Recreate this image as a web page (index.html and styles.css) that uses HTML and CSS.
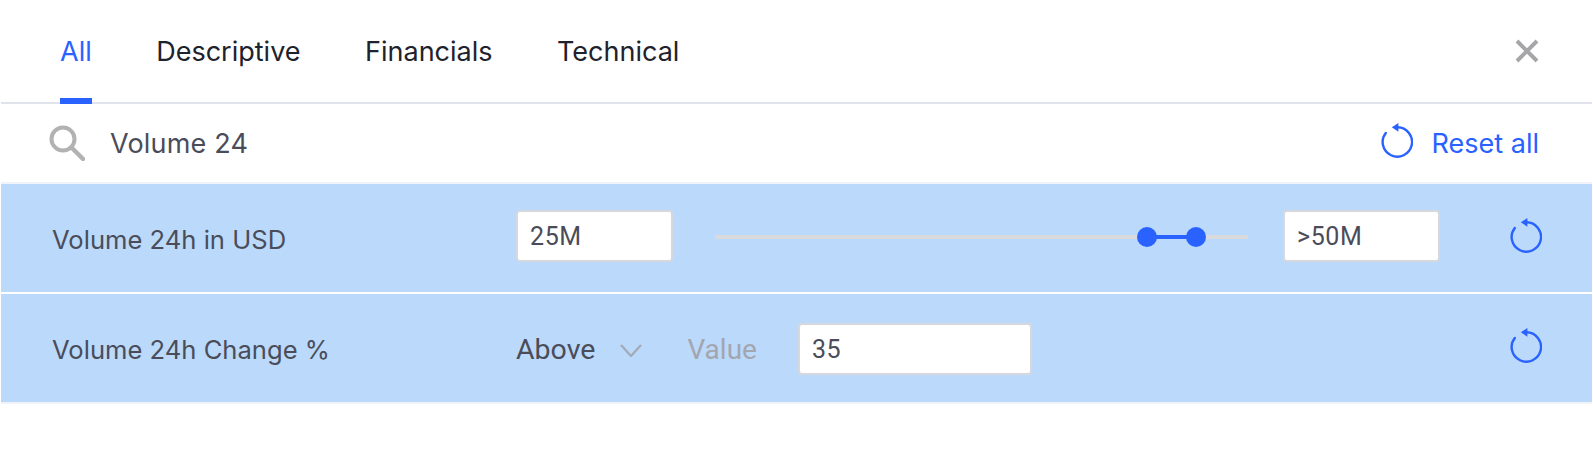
FILE: index.html
```html
<!DOCTYPE html>
<html lang="en">
<head>
<meta charset="utf-8">
<title>Filters</title>
<link rel="stylesheet" href="styles.css">
</head>
<body>
<svg class="defs" width="0" height="0" aria-hidden="true">
  <symbol id="reset" viewBox="0 0 32 35">
    <path d="M16.5 4.3A14.7 14.7 0 1 1 4.8 9.9" fill="none" stroke="currentColor" stroke-width="2.4" stroke-linecap="round"/>
    <path d="M10.8 4.3L17.4 0V8.8Z" fill="currentColor"/>
  </symbol>
</svg>
<div class="panel">
  <header class="tabs">
    <nav class="tab-list">
      <a class="tab tab-active">All</a>
      <a class="tab">Descriptive</a>
      <a class="tab">Financials</a>
      <a class="tab">Technical</a>
    </nav>
    <svg class="close" viewBox="0 0 24 24" aria-label="Close"><path d="M2 2L22 22M22 2L2 22" fill="none" stroke="#a6a6a8" stroke-width="4"/></svg>
  </header>
  <div class="search">
    <svg class="search-icon" viewBox="0 0 36 36"><circle cx="14" cy="14" r="11.5" fill="none" stroke="#b2b2b2" stroke-width="4"/><path d="M22.5 22.5L34 34" fill="none" stroke="#b2b2b2" stroke-width="4.4" stroke-linecap="round"/></svg>
    <span class="search-text">Volume 24</span>
    <button class="reset-all"><svg class="reset-icon reset-all-icon"><use href="#reset"/></svg><span>Reset all</span></button>
  </div>
  <div class="row">
    <span class="label">Volume 24h in USD</span>
    <div class="control control-range">
      <div class="input input-short">25M</div>
      <div class="slider">
        <div class="track"></div>
        <div class="range"></div>
        <div class="knob knob-a"></div>
        <div class="knob knob-b"></div>
      </div>
      <div class="input input-short">&gt;50M</div>
    </div>
    <svg class="reset-icon row-reset"><use href="#reset"/></svg>
  </div>
  <div class="row row-last">
    <span class="label">Volume 24h Change %</span>
    <div class="control control-cond">
      <span class="select">Above</span>
      <svg class="chevron" viewBox="0 0 22 13"><path d="M1 1L11 12L21 1" fill="none" stroke="#a3aab5" stroke-width="2.2"/></svg>
      <span class="value-label">Value</span>
      <div class="input input-long">35</div>
    </div>
    <svg class="reset-icon row-reset"><use href="#reset"/></svg>
  </div>
</div>
</body>
</html>
```
FILE: styles.css
```css
* { box-sizing: border-box; }
html, body { margin: 0; background: #fff; }
body { font-family: Inter, "Liberation Sans", sans-serif; height: 471px; overflow: hidden; }
.defs { position: absolute; }
.panel { margin: 0 1px; }
.tabs {
  height: 104px;
  border-bottom: 2px solid #e0e3eb;
  display: flex;
  justify-content: space-between;
  padding: 0 53px 0 59px;
}
.tab-list { display: flex; gap: 64.5px; }
.tab {
  height: 104px;
  padding-top: 36px;
  font-size: 27px;
  line-height: 32px;
  color: #1e222d;
}
.tab-active { color: #2962ff; border-bottom: 6px solid #2962ff; }
.close { width: 24px; height: 24px; margin-top: 39px; }
.search {
  height: 80px;
  border-bottom: 2px solid #f0f3fa;
  display: flex;
  align-items: center;
  padding: 0 53px 0 48px;
}
.search-icon { width: 36px; height: 36px; margin-right: 25px; }
.search-text { font-size: 27px; letter-spacing: 0.2px; color: #4a4d59; flex: 1; }
.reset-all {
  display: flex;
  align-items: center;
  gap: 19px;
  padding: 0;
  border: 0;
  background: none;
  font: inherit;
  font-size: 27px;
  color: #2962ff;
}
.reset-icon { width: 32px; height: 35px; color: #2962ff; flex: none; }
.reset-all-icon { margin-bottom: 5px; }
.row-reset { margin-bottom: 6px; }
.row {
  height: 110px;
  background: #bbd9fb;
  border-bottom: 2px solid #fff;
  display: flex;
  align-items: center;
  padding: 0 50px 0 51px;
}
.row-last { border-bottom-color: #f0f3fa; }
.label { width: 464px; padding-top: 2px; font-size: 25.6px; color: #4a4d59; }
.control { flex: 1; display: flex; align-items: center; }
.control-range { margin-bottom: 4px; }
.control-cond { margin-top: 2px; }
.input {
  height: 52px;
  background: #fff;
  border: 2px solid #d6d8de;
  border-radius: 4px;
  padding: 0 12px;
  display: flex;
  align-items: center;
  font-family: Roboto, "Liberation Sans", sans-serif;
  font-size: 25px;
  letter-spacing: 0.6px;
  color: #4a4d59;
}
.input-short { width: 157px; }
.input-long { width: 234px; margin-left: 41px; }
.slider { position: relative; width: 532px; height: 20px; margin: 2px 35px 0 43px; }
.track { position: absolute; left: -1px; right: 0; top: 8px; height: 4px; background: #d9dade; }
.range { position: absolute; left: 431px; width: 49px; top: 8px; height: 4px; background: #2962ff; }
.knob { position: absolute; top: 0; width: 20px; height: 20px; border-radius: 50%; background: #2962ff; }
.knob-a { left: 421px; }
.knob-b { left: 470px; }
.select { font-family: Roboto, "Liberation Sans", sans-serif; font-size: 28.5px; color: #4a4d59; }
.chevron { width: 22px; height: 13px; margin: 2px 0 0 25px; }
.value-label { font-family: Roboto, "Liberation Sans", sans-serif; font-size: 28px; color: #a3a6af; margin-left: 45px; }
```
